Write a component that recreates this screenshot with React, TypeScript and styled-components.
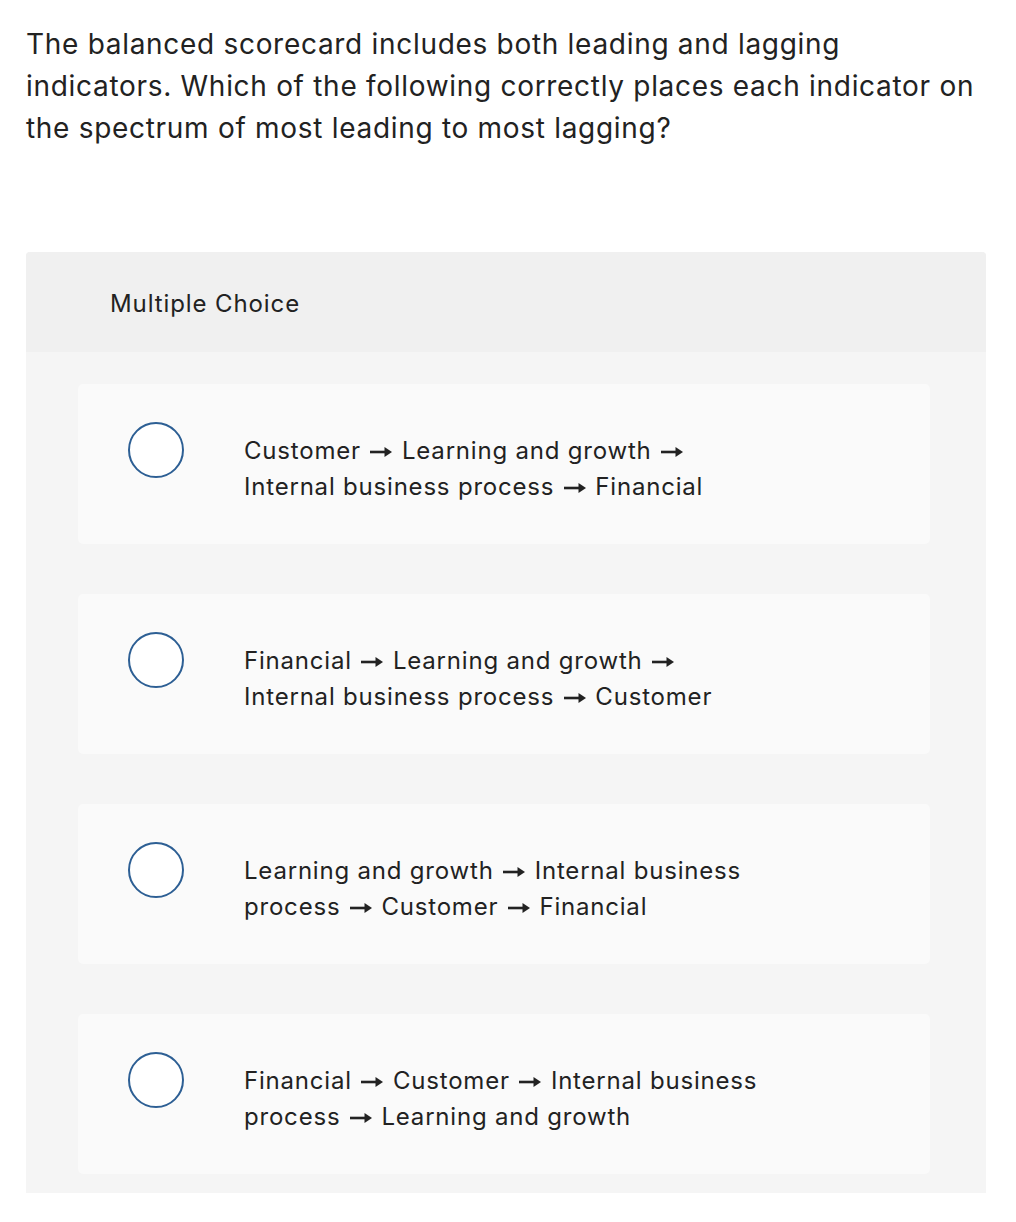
import { FC } from "react";
import styled, { createGlobalStyle } from "styled-components";

const GlobalStyle = createGlobalStyle`
  html, body {
    margin: 0;
    padding: 0;
    background: #ffffff;
  }
  body {
    font-family: "Inter", "Liberation Sans", sans-serif;
    color: #222222;
  }
`;

const Page = styled.div`
  width: 1016px;
  padding: 23px 30px 29px 26px;
  box-sizing: border-box;
`;

const Question = styled.p`
  margin: 0 0 103px;
  font-size: 28px;
  line-height: 42px;
  letter-spacing: 0.7px;
  color: #222222;
`;

const Panel = styled.div`
  width: 960px;
  border-radius: 4px 4px 0 0;
  overflow: hidden;
  background: #f5f5f5;
`;

const PanelHeader = styled.div`
  height: 100px;
  display: flex;
  align-items: center;
  padding: 2px 0 0 84px;
  box-sizing: border-box;
  background: #f0f0f0;
  font-size: 24px;
  letter-spacing: 0.9px;
  color: #222222;
`;

const OptionList = styled.div`
  display: flex;
  flex-direction: column;
  gap: 50px;
  padding: 32px 56px 19px 52px;
`;

const Option = styled.label`
  height: 160px;
  box-sizing: border-box;
  display: flex;
  align-items: flex-start;
  padding: 38px 0 0 50px;
  background: #fafafa;
  border-radius: 5px;
  cursor: pointer;
`;

const Radio = styled.span`
  flex: none;
  width: 56px;
  height: 56px;
  box-sizing: border-box;
  border: 2px solid #2d5f94;
  border-radius: 50%;
  background: #ffffff;
`;

const OptionText = styled.span`
  margin: 11px 0 0 60px;
  font-size: 24px;
  line-height: 36px;
  letter-spacing: 0.8px;
  color: #222222;
`;

const ArrowSvg = styled.svg`
  display: inline-block;
  width: 26px;
  height: 12px;
  vertical-align: 1px;
`;

const Arrow: FC = () => (
  <ArrowSvg viewBox="0 0 26 12">
    <rect x="2" y="4.7" width="16" height="2.6" fill="#222222" />
    <path d="M16.5 1 L24 6 L16.5 11 Z" fill="#222222" />
  </ArrowSvg>
);

// each line is split on the arrow; a trailing arrow stays at the line end
const options: string[][] = [
  ["Customer → Learning and growth →", "Internal business process → Financial"],
  ["Financial → Learning and growth →", "Internal business process → Customer"],
  ["Learning and growth → Internal business", "process → Customer → Financial"],
  ["Financial → Customer → Internal business", "process → Learning and growth"],
];

const renderLine = (line: string) =>
  line.split("→").map((part, i, all) => (
    <span key={i}>
      {part}
      {i < all.length - 1 && <Arrow />}
    </span>
  ));

const App: FC = () => {
  return (
    <>
      <GlobalStyle />
      <Page>
        <Question>
          The balanced scorecard includes both leading and lagging
          <br />
          indicators. Which of the following correctly places each indicator on
          <br />
          the spectrum of most leading to most lagging?
        </Question>
        <Panel>
          <PanelHeader>Multiple Choice</PanelHeader>
          <OptionList>
            {options.map((lines, i) => (
              <Option key={i}>
                <Radio />
                <OptionText>
                  {renderLine(lines[0])}
                  <br />
                  {renderLine(lines[1])}
                </OptionText>
              </Option>
            ))}
          </OptionList>
        </Panel>
      </Page>
    </>
  );
};

export default App;
